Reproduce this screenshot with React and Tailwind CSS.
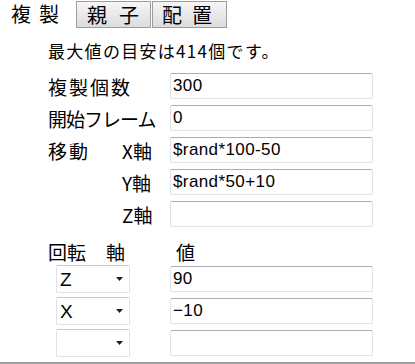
const TextBox = ({ value = '', className = '' }) => (
    <div className={`h-[26px] w-[203px] rounded-[2px] border border-[#dfe2e8] border-t-[#abadb3] bg-white pl-[2px] flex items-center text-[17px] tracking-[0.4px] text-black whitespace-nowrap font-['Liberation_Sans',sans-serif] ${className}`}>
        {value}
    </div>
);

const AxisSelect = ({ value = '' }) => (
    <div className="h-[28px] w-[74px] rounded-[2px] border border-[#dfe2e8] border-t-[#c5c7cc] bg-white flex items-center justify-between pl-[3px] pr-[6px]">
        <span className="text-[19px] font-['Liberation_Sans',sans-serif] leading-none">{value}</span>
        {/* small dropdown arrow */}
        <svg width="7" height="4" viewBox="0 0 7 4"><path d="M0 0h7L3.5 4z" fill="#222" /></svg>
    </div>
);

const Row = ({ label, children, labelClass = '' }) => (
    <div className="flex items-center h-[26px]">
        <div className={`w-[122px] text-[19px] leading-none whitespace-nowrap ${labelClass}`}>{label}</div>
        {children}
    </div>
);

const App = () => {
    return (
        <div className="w-[415px] h-[364px] bg-white text-black overflow-hidden font-['Noto_Sans_CJK_JP',sans-serif]">
            {/* Tabs */}
            <div className="flex h-[28px] whitespace-nowrap">
                <div className="w-[76px] flex items-center pl-[11px] text-[20px] tracking-[8px]">複製</div>
                <div className="w-[75px] mt-[1px] border border-[#9d9d9d] bg-gradient-to-b from-[#f6f6f6] to-[#dcdcdc] flex items-center pl-[10px] text-[20px] leading-none tracking-[12px]">親子</div>
                <div className="w-[75px] mt-[1px] ml-[1px] border border-[#9d9d9d] bg-gradient-to-b from-[#f6f6f6] to-[#dcdcdc] flex items-center pl-[9px] text-[20px] leading-none tracking-[10px]">配置</div>
            </div>

            <div className="pl-[48px] pt-[13px]">
                <div className="text-[17px] leading-[20px] tracking-[1.3px] h-[25px] whitespace-nowrap">最大値の目安は414個です。</div>

                <div className="flex flex-col gap-[6px] mt-[7px]">
                    <Row label="複製個数" labelClass="tracking-[2px]"><TextBox value="300" /></Row>
                    <Row label="開始フレーム" labelClass="tracking-[-1px]"><TextBox value="0" /></Row>
                    <div className="flex items-center h-[26px]">
                        <div className="w-[74px] text-[19px] leading-none tracking-[2px]">移動</div>
                        <div className="w-[48px] text-[19px] leading-none">X軸</div>
                        <TextBox value="$rand*100-50" />
                    </div>
                    <div className="flex items-center h-[26px]">
                        <div className="w-[74px]" />
                        <div className="w-[48px] text-[19px] leading-none">Y軸</div>
                        <TextBox value="$rand*50+10" />
                    </div>
                    <div className="flex items-center h-[26px]">
                        <div className="w-[74px]" />
                        <div className="w-[48px] text-[19px] leading-none">Z軸</div>
                        <TextBox />
                    </div>
                </div>

                {/* Rotation */}
                <div className="flex items-center h-[20px] mt-[14px] text-[19px] leading-none">
                    <span className="w-[58px]">回転</span>
                    <span className="w-[70px]">軸</span>
                    <span>値</span>
                </div>
                <div className="flex flex-col gap-[4px] mt-[4px] pl-[8px]">
                    <div className="flex items-center">
                        <AxisSelect value="Z" />
                        <TextBox value="90" className="ml-[40px]" />
                    </div>
                    <div className="flex items-center">
                        <AxisSelect value="X" />
                        <TextBox value="−10" className="ml-[40px]" />
                    </div>
                    <div className="flex items-center">
                        <AxisSelect />
                        <TextBox className="ml-[40px]" />
                    </div>
                </div>
            </div>
            <div className="mt-[5px] h-[2px] bg-[#a0a0a0]" />
        </div>
    );
};

export default App;
